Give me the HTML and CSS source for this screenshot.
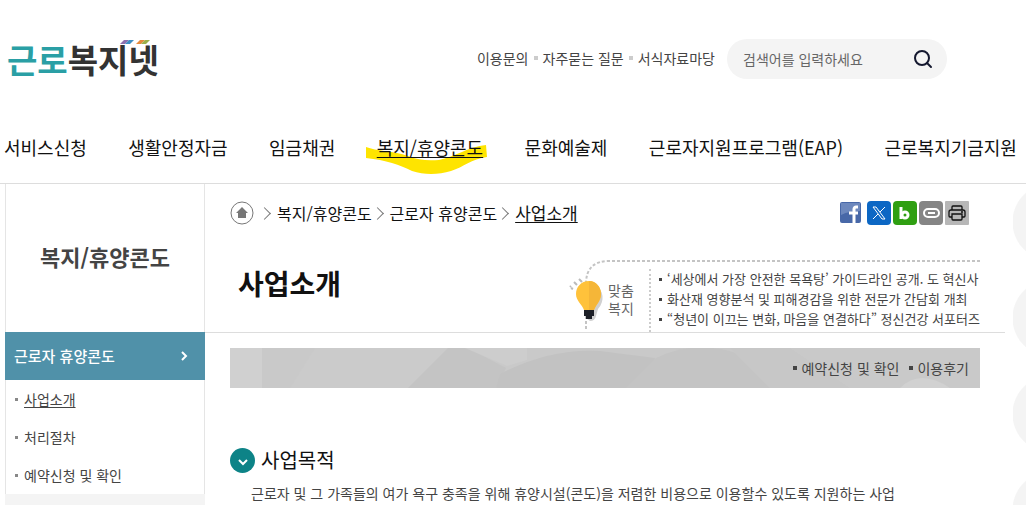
FILE: index.html
```
<!DOCTYPE html>
<html lang="ko">
<head>
    <meta charset="UTF-8">
    <meta name="viewport" content="width=device-width, initial-scale=1.0">
    <title>근로복지넷 - 사업소개</title>
    <link rel="stylesheet" href="styles.css">
</head>
<body>
    <header class="header">
        <div class="header-top">
            <a href="#" class="logo">
                <span class="logo-point">근로</span>복지넷
                <svg class="logo-mark" width="30" height="4" viewBox="0 0 30 4">
                    <path d="M4 0h5L5 4H0z" fill="#8d6fae"/>
                    <path d="M9 0h5l-4 4H5z" fill="#3f8fc4"/>
                    <path d="M20 0h5l-4 4h-5z" fill="#e58a3c"/>
                    <path d="M25 0h5l-4 4h-5z" fill="#9ab04a"/>
                </svg>
            </a>
            <ul class="util">
                <li><a href="#">이용문의</a></li>
                <li><a href="#">자주묻는 질문</a></li>
                <li><a href="#">서식자료마당</a></li>
            </ul>
            <form class="search">
                <input type="text" placeholder="검색어를 입력하세요" aria-label="검색어">
                <button type="button" aria-label="검색">
                    <svg width="20" height="20" viewBox="0 0 20 20" fill="none" stroke="#14182f" stroke-width="2">
                        <circle cx="9" cy="9" r="7"/>
                        <path d="M14 14l4 4" stroke-linecap="round"/>
                    </svg>
                </button>
            </form>
        </div>
        <nav class="gnb">
            <a href="#">서비스신청</a>
            <a href="#">생활안정자금</a>
            <a href="#">임금채권</a>
            <a href="#" class="on">
                <svg class="marker" width="122" height="32" viewBox="0 0 122 32">
                    <path d="M0 3C10 7 28 7 42 12C52 16 61 17 73 16C88 13 102 3 120 1L121 13C105 15 98 23 85 27C72 31 58 31 46 27C34 21 20 16 0 14z" fill="#fee400"/>
                </svg>
                <span>복지/휴양콘도</span>
            </a>
            <a href="#">문화예술제</a>
            <a href="#">근로자지원프로그램(EAP)</a>
            <a href="#">근로복지기금지원</a>
        </nav>
    </header>

    <div class="wrap">
        <aside class="side">
            <h2>복지/휴양콘도</h2>
            <a href="#" class="side-head">
                근로자 휴양콘도
                <svg width="8" height="10" viewBox="0 0 8 10" fill="none" stroke="#fff" stroke-width="2">
                    <path d="M2 1l4 4-4 4"/>
                </svg>
            </a>
            <ul class="side-menu">
                <li><a href="#" class="on">사업소개</a></li>
                <li><a href="#">처리절차</a></li>
                <li><a href="#">예약신청 및 확인</a></li>
            </ul>
        </aside>

        <main class="content">
            <div class="content-head">
                <div class="location">
                    <ol class="path">
                        <li>
                            <a href="#" aria-label="홈">
                                <svg width="24" height="24" viewBox="0 0 24 24">
                                    <circle cx="12" cy="12" r="11" fill="#fff" stroke="#777"/>
                                    <path d="M12 6l6 6h-2v5H8v-5H6z" fill="#777"/>
                                </svg>
                            </a>
                        </li>
                        <li><a href="#">복지/휴양콘도</a></li>
                        <li><a href="#">근로자 휴양콘도</a></li>
                        <li><a href="#" class="on">사업소개</a></li>
                    </ol>
                    <div class="share">
                        <a href="#" class="facebook" aria-label="페이스북">
                            <svg width="24" height="24" viewBox="0 0 24 24">
                                <rect x="1" y="1" width="21" height="21" rx="2" fill="#4868a8"/>
                                <path d="M2 2h19v8C14 10 8 11 2 14z" fill="#6d88bd"/>
                                <path d="M19 6h-2c-1 0-2 1-2 2v14M10 12h9" fill="none" stroke="#fff" stroke-width="3"/>
                            </svg>
                        </a>
                        <a href="#" aria-label="엑스">
                            <svg width="24" height="24" viewBox="0 0 24 24" fill="none" stroke="#fff">
                                <rect width="24" height="24" rx="4" fill="#0c67c4" stroke="none"/>
                                <path d="M6 6h3l9 12h-3z"/>
                                <path d="M18 6l-5 5M11 13l-5 5"/>
                            </svg>
                        </a>
                        <a href="#" aria-label="네이버 블로그">
                            <svg width="24" height="24" viewBox="0 0 24 24" fill="none" stroke="#fff" stroke-width="3">
                                <rect width="24" height="24" rx="4" fill="#2f9f12" stroke="none"/>
                                <path d="M8 6v12"/>
                                <circle cx="12" cy="14" r="3"/>
                            </svg>
                        </a>
                        <a href="#" aria-label="주소 복사">
                            <svg width="24" height="24" viewBox="0 0 24 24" fill="none" stroke="#fff" stroke-width="2">
                                <rect width="24" height="24" rx="4" fill="#858585" stroke="none"/>
                                <rect x="5" y="8" width="15" height="8" rx="4"/>
                                <path d="M9 12h7"/>
                            </svg>
                        </a>
                        <a href="#" aria-label="인쇄">
                            <svg width="24" height="24" viewBox="0 0 24 24" fill="none" stroke="#111" stroke-width="1.3">
                                <rect width="24" height="24" rx="1" fill="#b7b7b7" stroke="none"/>
                                <path d="M7 9V6q0-1 1-1h8q1 0 1 1v3"/>
                                <path d="M7 16H5q-1 0-1-1v-4q0-2 2-2h12q2 0 2 2v4q0 1-1 1h-2"/>
                                <path d="M7 13h10v5q0 1-1 1H8q-1 0-1-1zM16 11h2"/>
                            </svg>
                        </a>
                    </div>
                </div>
                <div class="title-row">
                    <h1>사업소개</h1>
                    <section class="news">
                        <svg class="news-line" width="395" height="71" viewBox="0 0 395 71">
                            <path d="M395 1H24Q1 1 1 24V71" fill="none" stroke="#c4c4c4" stroke-width="2" stroke-dasharray="3 2"/>
                        </svg>
                        <svg class="bulb" width="38" height="50" viewBox="0 0 38 50">
                            <path d="M2 14l1-1M6 9l3 3M11 6l3 3M3 15l2 1" stroke="#bbb" stroke-width="2"/>
                            <path d="M27 12c9 5 10 16 3 24l-2 7q-1 5-6 5l-4-3z" fill="#d0d0d0"/>
                            <path d="M21 8c-8 0-13 6-13 13 0 7 6 10 8 16h10c2-6 7-9 7-16 0-7-5-13-12-13z" fill="#ffc23b"/>
                            <path d="M21 8c7 0 12 6 12 13 0 7-5 10-7 16h-5z" fill="#f5b638"/>
                            <path d="M16 37h10v6h-2v3h-6v-3h-2z" fill="#1d2027"/>
                        </svg>
                        <h2>맞춤<br>복지</h2>
                        <ul>
                            <li><a href="#">‘세상에서 가장 안전한 목욕탕’ 가이드라인 공개. 도 혁신사</a></li>
                            <li><a href="#">화산재 영향분석 및 피해경감을 위한 전문가 간담회 개최</a></li>
                            <li><a href="#">“청년이 이끄는 변화, 마음을 연결하다” 정신건강 서포터즈</a></li>
                        </ul>
                    </section>
                </div>
            </div>

            <div class="content-body">
                <div class="quick-bar">
                    <svg class="pattern" viewBox="0 0 750 40" preserveAspectRatio="none">
                        <path d="M0 0h32v40H0z" fill="#d0d0d0"/>
                        <path d="M85 0h135l-42 40H60z" fill="#cbcbcb"/>
                        <path d="M178 40L218 0h20l38 20-10 20z" fill="#c4c4c4"/>
                        <path d="M235 0h62v12l-20 6z" fill="#cdcdcd"/>
                        <path d="M266 40l4-14q50-26 100-23l55 7-10 30z" fill="#c2c2c2"/>
                        <path d="M396 40l30-30q40-20 90-2l25 32z" fill="#c4c4c4"/>
                        <path d="M500 0h60l60 40h-80z" fill="#c7c7c7"/>
                        <path d="M670 40q20-20 50 0z" fill="#d1d1d1"/>
                    </svg>
                    <a href="#">예약신청 및 확인</a>
                    <a href="#">이용후기</a>
                </div>
                <h3>
                    <svg width="25" height="25" viewBox="0 0 25 25">
                        <circle cx="12.5" cy="12.5" r="12.5" fill="#0d8387"/>
                        <path d="M9 12l4 4 4-4" fill="none" stroke="#fff" stroke-width="2"/>
                    </svg>
                    사업목적
                </h3>
                <p>근로자 및 그 가족들의 여가 욕구 충족을 위해 휴양시설(콘도)을 저렴한 비용으로 이용할수 있도록 지원하는 사업</p>
            </div>
        </main>

        <div class="rail"></div>
    </div>
</body>
</html>
```
FILE: styles.css
```
* {
    box-sizing: border-box;
}
body {
    margin: 0;
    min-height: 100vh;
    display: flex;
    flex-direction: column;
    background: #fff;
    color: #444;
    font-family: "Noto Sans CJK KR", sans-serif;
    font-size: 14px;
    line-height: 20px;
}
h1, h2, h3, p, ul, ol {
    margin: 0;
    padding: 0;
}
ul, ol {
    list-style: none;
}
a {
    color: inherit;
    text-decoration: none;
    white-space: nowrap;
}
svg {
    display: block;
    flex: none;
}
.on {
    text-decoration: underline;
    text-underline-offset: 2px;
}

/* header */
.header {
    border-bottom: 1px solid #ddd;
}
.header-top {
    display: flex;
    align-items: center;
    padding: 39px 79px 0 7px;
}
.logo {
    position: relative;
    margin-right: auto;
    color: #333;
    font-size: 33px;
    font-weight: 700;
    line-height: 40px;
}
.logo-point {
    color: #2a9fa5;
}
.logo-mark {
    position: absolute;
    top: 1px;
    right: 9px;
}
.util {
    display: flex;
    gap: 5px;
    margin-right: 12px;
    padding-bottom: 2px;
}
.util li {
    display: flex;
    align-items: center;
    gap: 5px;
}
.util li + li::before {
    content: "";
    width: 4px;
    height: 4px;
    background: #ccc;
}
.search {
    display: flex;
    align-items: center;
    width: 220px;
    height: 40px;
    padding: 0 14px 0 16px;
    border-radius: 20px;
    background: #f4f4f4;
}
.search input {
    flex: 1;
    min-width: 0;
    padding: 0;
    border: 0;
    outline: none;
    background: none;
    font: inherit;
}
.search input::placeholder {
    color: #666;
}
.search button {
    padding: 0;
    border: 0;
    background: none;
    cursor: pointer;
}
.gnb {
    display: flex;
    justify-content: space-between;
    padding: 53px 9px 21px 4px;
    color: #111;
    font-size: 18px;
    line-height: 30px;
}
.gnb a {
    position: relative;
}
.gnb span {
    position: relative;
}
.marker {
    position: absolute;
    top: 12px;
    left: -11px;
}

/* layout */
.wrap {
    flex: 1;
    display: flex;
}

/* left menu */
.side {
    flex: none;
    width: 200px;
    margin-left: 5px;
    background: #f4f4f4;
}
.side h2 {
    height: 148px;
    border: 1px solid #e5e5e5;
    border-width: 0 1px;
    background: #fff;
    font-size: 22px;
    line-height: 144px;
    text-align: center;
}
.side-head {
    display: flex;
    align-items: center;
    justify-content: space-between;
    height: 48px;
    padding: 0 17px 0 9px;
    background: #5091a9;
    color: #fff;
    font-size: 15px;
    font-weight: 500;
}
.side-menu {
    border: 1px solid #e5e5e5;
    border-width: 0 1px;
    background: #fff;
}
.side-menu li {
    display: flex;
    align-items: center;
    gap: 6px;
    height: 38px;
    padding-left: 9px;
}
.side-menu li::before {
    content: "";
    width: 3px;
    height: 3px;
    background: #888;
}

/* content */
.content {
    flex: 1;
    min-width: 0;
}
.content-head {
    padding: 17px 25px 0;
    border-bottom: 1px solid #ddd;
}
.location {
    display: flex;
    justify-content: space-between;
    align-items: center;
    padding-right: 11px;
}
.path {
    display: flex;
    align-items: center;
    color: #111;
    font-size: 16px;
    line-height: 24px;
}
.path li {
    display: flex;
    align-items: center;
}
.path li + li::before {
    content: "";
    width: 8px;
    height: 8px;
    margin: 0 8px 0 1px;
    border: 1px solid #777;
    border-width: 1px 1px 0 0;
    transform: rotate(45deg);
}
.path li:nth-child(2)::before {
    margin-left: 6px;
}
.path .on {
    font-size: 17px;
}
.share {
    display: flex;
    gap: 2px;
}
.share .facebook {
    margin-right: 2px;
}
.title-row {
    display: flex;
    justify-content: space-between;
    padding-top: 35px;
}
.title-row h1 {
    padding-left: 8px;
    color: #111;
    font-size: 28px;
    line-height: 46px;
    white-space: nowrap;
}
.news {
    position: relative;
    display: flex;
    width: 395px;
    height: 72px;
    padding: 9px 0 0 23px;
}
.news-line {
    position: absolute;
    top: 0;
    left: 0;
}
.bulb {
    position: absolute;
    top: 13px;
    left: -17px;
}
.news h2 {
    width: 41px;
    padding-top: 12px;
    color: #666;
    font-size: 14px;
    font-weight: 400;
    line-height: 18px;
}
.news ul {
    padding-left: 8px;
    border-left: 2px dotted #ccc;
    font-size: 13px;
}
.news li {
    display: flex;
    align-items: center;
    gap: 5px;
}
.news li::before,
.quick-bar a::before {
    content: "";
    width: 3px;
    height: 3px;
    background: #444;
}
.content-body {
    padding: 15px 25px 0;
}
.quick-bar {
    position: relative;
    display: flex;
    align-items: center;
    justify-content: flex-end;
    gap: 10px;
    height: 40px;
    padding-right: 11px;
    background: #c9c9c9;
}
.pattern {
    position: absolute;
    inset: 0;
    width: 100%;
    height: 100%;
}
.quick-bar a {
    position: relative;
    display: flex;
    align-items: center;
    gap: 4px;
}
.quick-bar a::before {
    width: 4px;
    height: 4px;
}
.content-body h3 {
    display: flex;
    align-items: center;
    gap: 6px;
    margin-top: 57px;
    color: #111;
    font-size: 20px;
    font-weight: 400;
    line-height: 30px;
}
.content-body p {
    margin-top: 8px;
    padding-left: 21px;
}

/* round buttons of the quick menu, cut off by the window edge */
.rail {
    flex: none;
    width: 13px;
    margin-left: 8px;
    background: radial-gradient(circle at 38px 38px, #f4f4f4 38px, transparent 39px) 0 0 / 76px 96px repeat-y;
}
```
